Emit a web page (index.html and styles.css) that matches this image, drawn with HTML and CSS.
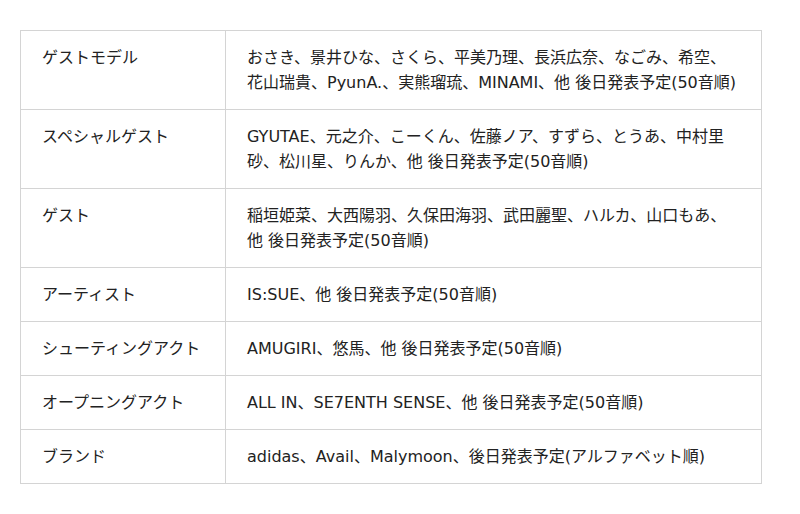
FILE: index.html
```html
<!DOCTYPE html>
<html lang="ja">
<head>
<meta charset="utf-8">
<link rel="stylesheet" href="styles.css">
</head>
<body>
<div class="page">
<table class="lineup">
<tr><th>ゲストモデル</th><td>おさき、景井ひな、さくら、平美乃理、長浜広奈、なごみ、希空、花山瑞貴、PyunA.、実熊瑠琉、MINAMI、他 後日発表予定(50音順)</td></tr>
<tr><th>スペシャルゲスト</th><td>GYUTAE、元之介、こーくん、佐藤ノア、すずら、とうあ、中村里砂、松川星、りんか、他 後日発表予定(50音順)</td></tr>
<tr><th>ゲスト</th><td>稲垣姫菜、大西陽羽、久保田海羽、武田麗聖、ハルカ、山口もあ、他 後日発表予定(50音順)</td></tr>
<tr><th>アーティスト</th><td>IS:SUE、他 後日発表予定(50音順)</td></tr>
<tr><th>シューティングアクト</th><td>AMUGIRI、悠馬、他 後日発表予定(50音順)</td></tr>
<tr><th>オープニングアクト</th><td>ALL IN、SE7ENTH SENSE、他 後日発表予定(50音順)</td></tr>
<tr><th>ブランド</th><td>adidas、Avail、Malymoon、後日発表予定(アルファベット順)</td></tr>
</table>
</div>
</body>
</html>
```
FILE: styles.css
```css
html, body { margin: 0; padding: 0; background: #fff; }
.page { padding: 30px 38px 0 20px; }
.lineup {
  width: 742px;
  border-collapse: collapse;
  font-family: "DejaVu Sans", "Noto Sans CJK JP", sans-serif;
  font-size: 16px;
  line-height: 25px;
  color: #222;
}
.lineup th, .lineup td {
  border: 1px solid #d4d4d4;
  padding: 14px 21px 14px 21px;
  text-align: left;
  vertical-align: top;
  font-weight: normal;
}
.lineup th { width: 162px; }
```
